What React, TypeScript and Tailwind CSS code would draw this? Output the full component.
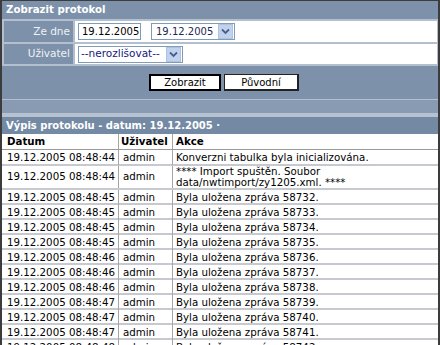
import React from "react";

const rows: [string, string, string[]][] = [
  ["19.12.2005 08:48:45", "admin", ["Byla uložena zpráva 58732."]],
  ["19.12.2005 08:48:45", "admin", ["Byla uložena zpráva 58733."]],
  ["19.12.2005 08:48:45", "admin", ["Byla uložena zpráva 58734."]],
  ["19.12.2005 08:48:45", "admin", ["Byla uložena zpráva 58735."]],
  ["19.12.2005 08:48:46", "admin", ["Byla uložena zpráva 58736."]],
  ["19.12.2005 08:48:46", "admin", ["Byla uložena zpráva 58737."]],
  ["19.12.2005 08:48:46", "admin", ["Byla uložena zpráva 58738."]],
  ["19.12.2005 08:48:47", "admin", ["Byla uložena zpráva 58739."]],
  ["19.12.2005 08:48:47", "admin", ["Byla uložena zpráva 58740."]],
  ["19.12.2005 08:48:47", "admin", ["Byla uložena zpráva 58741."]],
  ["19.12.2005 08:48:48", "admin", ["Byla uložena zpráva 58742."]],
];

function Arrow() {
  return (
    <span className="flex h-[15px] w-[15px] items-center justify-center bg-[#c1d2ee] border border-[#b0c2e4]">
      <svg width="9" height="7" viewBox="0 0 9 7">
        <path d="M1 1.5 L4.5 5 L8 1.5" stroke="#4a5f86" strokeWidth="1.8" fill="none" />
      </svg>
    </span>
  );
}

function Row({ d, u, a, h, first }: { d: string; u: string; a: string[]; h: string; first?: boolean }) {
  return (
    <div className={`grid grid-cols-[117px_54px_1fr] border-b-2 border-[#c6cad0] ${h}`}>
      <div className="pl-[5px] border-r border-[#a6a6a6] flex items-center whitespace-nowrap">{d}</div>
      <div className="pl-[4px] border-r border-[#a6a6a6] flex items-center">{u}</div>
      <div className={`pl-[3px] flex flex-col justify-center whitespace-nowrap ${first ? "" : ""} leading-[11px]`}>
        {a.map((t, j) => (
          <div key={j}>{t}</div>
        ))}
      </div>
    </div>
  );
}

export default function App() {
  return (
    <div
      className="w-[440px] h-[345px] overflow-hidden bg-white border-l-2 border-r-2 border-t border-[#3c3c3c] text-[10.25px] text-black"
      style={{ fontFamily: '"DejaVu Sans", Verdana, sans-serif' }}
    >
      <div className="bg-[#7d91aa]">
        <div className="h-[18px] flex items-center pl-[4px] font-bold text-white text-[10.2px]">Zobrazit protokol</div>
        <div className="flex flex-col gap-[2px] py-[2px] bg-[#b3bfce] pl-[2px] pr-[1px]">
          <div className="flex gap-[2px] h-[21px]">
            <div className="w-[69px] bg-[#7d91aa] flex items-center justify-end pr-[3px] text-[#eef1f5] text-[10.5px]">Ze dne</div>
            <div className="flex-1 bg-white flex items-center pl-[3px]">
              <div className="h-[17px] w-[63px] border border-[#7f9db9] flex items-center pl-[3px] text-[10px] text-black">19.12.2005</div>
              <div className="ml-[10px] h-[17px] w-[84px] border border-[#7f9db9] flex items-center justify-between pl-[4px] pr-[1px] text-[10px] text-[#1d2a55]">
                <span>19.12.2005</span>
                <Arrow />
              </div>
            </div>
          </div>
          <div className="flex gap-[2px] h-[20px]">
            <div className="w-[69px] bg-[#7d91aa] flex items-center justify-end pr-[3px] text-[#eef1f5] text-[10.5px]">Uživatel</div>
            <div className="flex-1 bg-white flex items-center pl-[3px]">
              <div className="h-[17px] w-[105px] border border-[#7f9db9] flex items-center justify-between pl-[2px] pr-[1px] text-[10.5px] text-[#16207a]">
                <span>--nerozlišovat--</span>
                <Arrow />
              </div>
            </div>
          </div>
        </div>
        <div className="h-[34px] flex items-center justify-center gap-[3px] pl-[8px] border-b border-[#b3bfce]">
          <div className="w-[72px] h-[17px] bg-white border-2 border-black flex items-center justify-center text-[10px]">Zobrazit</div>
          <div className="w-[75px] h-[17px] bg-white border border-[#222] border-r-2 border-b-2 flex items-center justify-center text-[10px]">Původní</div>
        </div>
        <div className="h-[13px] bg-[#889bb3]" />
        <div className="h-[4px] bg-[#b6c2d0]" />
        <div className="h-[17px] bg-[#7489a3] flex items-center pl-[4px] font-bold text-white text-[10px]">Výpis protokolu - datum: 19.12.2005 ·</div>
      </div>
      <div className="grid grid-cols-[117px_54px_1fr] h-[16px] border-b border-[#9a9a9a] font-bold">
        <div className="pl-[5px] border-r border-[#a6a6a6] flex items-center">Datum</div>
        <div className="pl-[2px] border-r border-[#a6a6a6] flex items-center">Uživatel</div>
        <div className="pl-[3px] flex items-center">Akce</div>
      </div>
      <Row d="19.12.2005 08:48:44" u="admin" a={["Konverzni tabulka byla inicializována."]} h="h-[16px]" />
      <Row d="19.12.2005 08:48:44" u="admin" a={["**** Import spuštěn. Soubor", "data/nwtimport/zy1205.xml. ****"]} h="h-[24px]" />
      {rows.map((r, i) => (
        <Row key={i} d={r[0]} u={r[1]} a={r[2]} h="h-[15px]" />
      ))}
    </div>
  );
}
